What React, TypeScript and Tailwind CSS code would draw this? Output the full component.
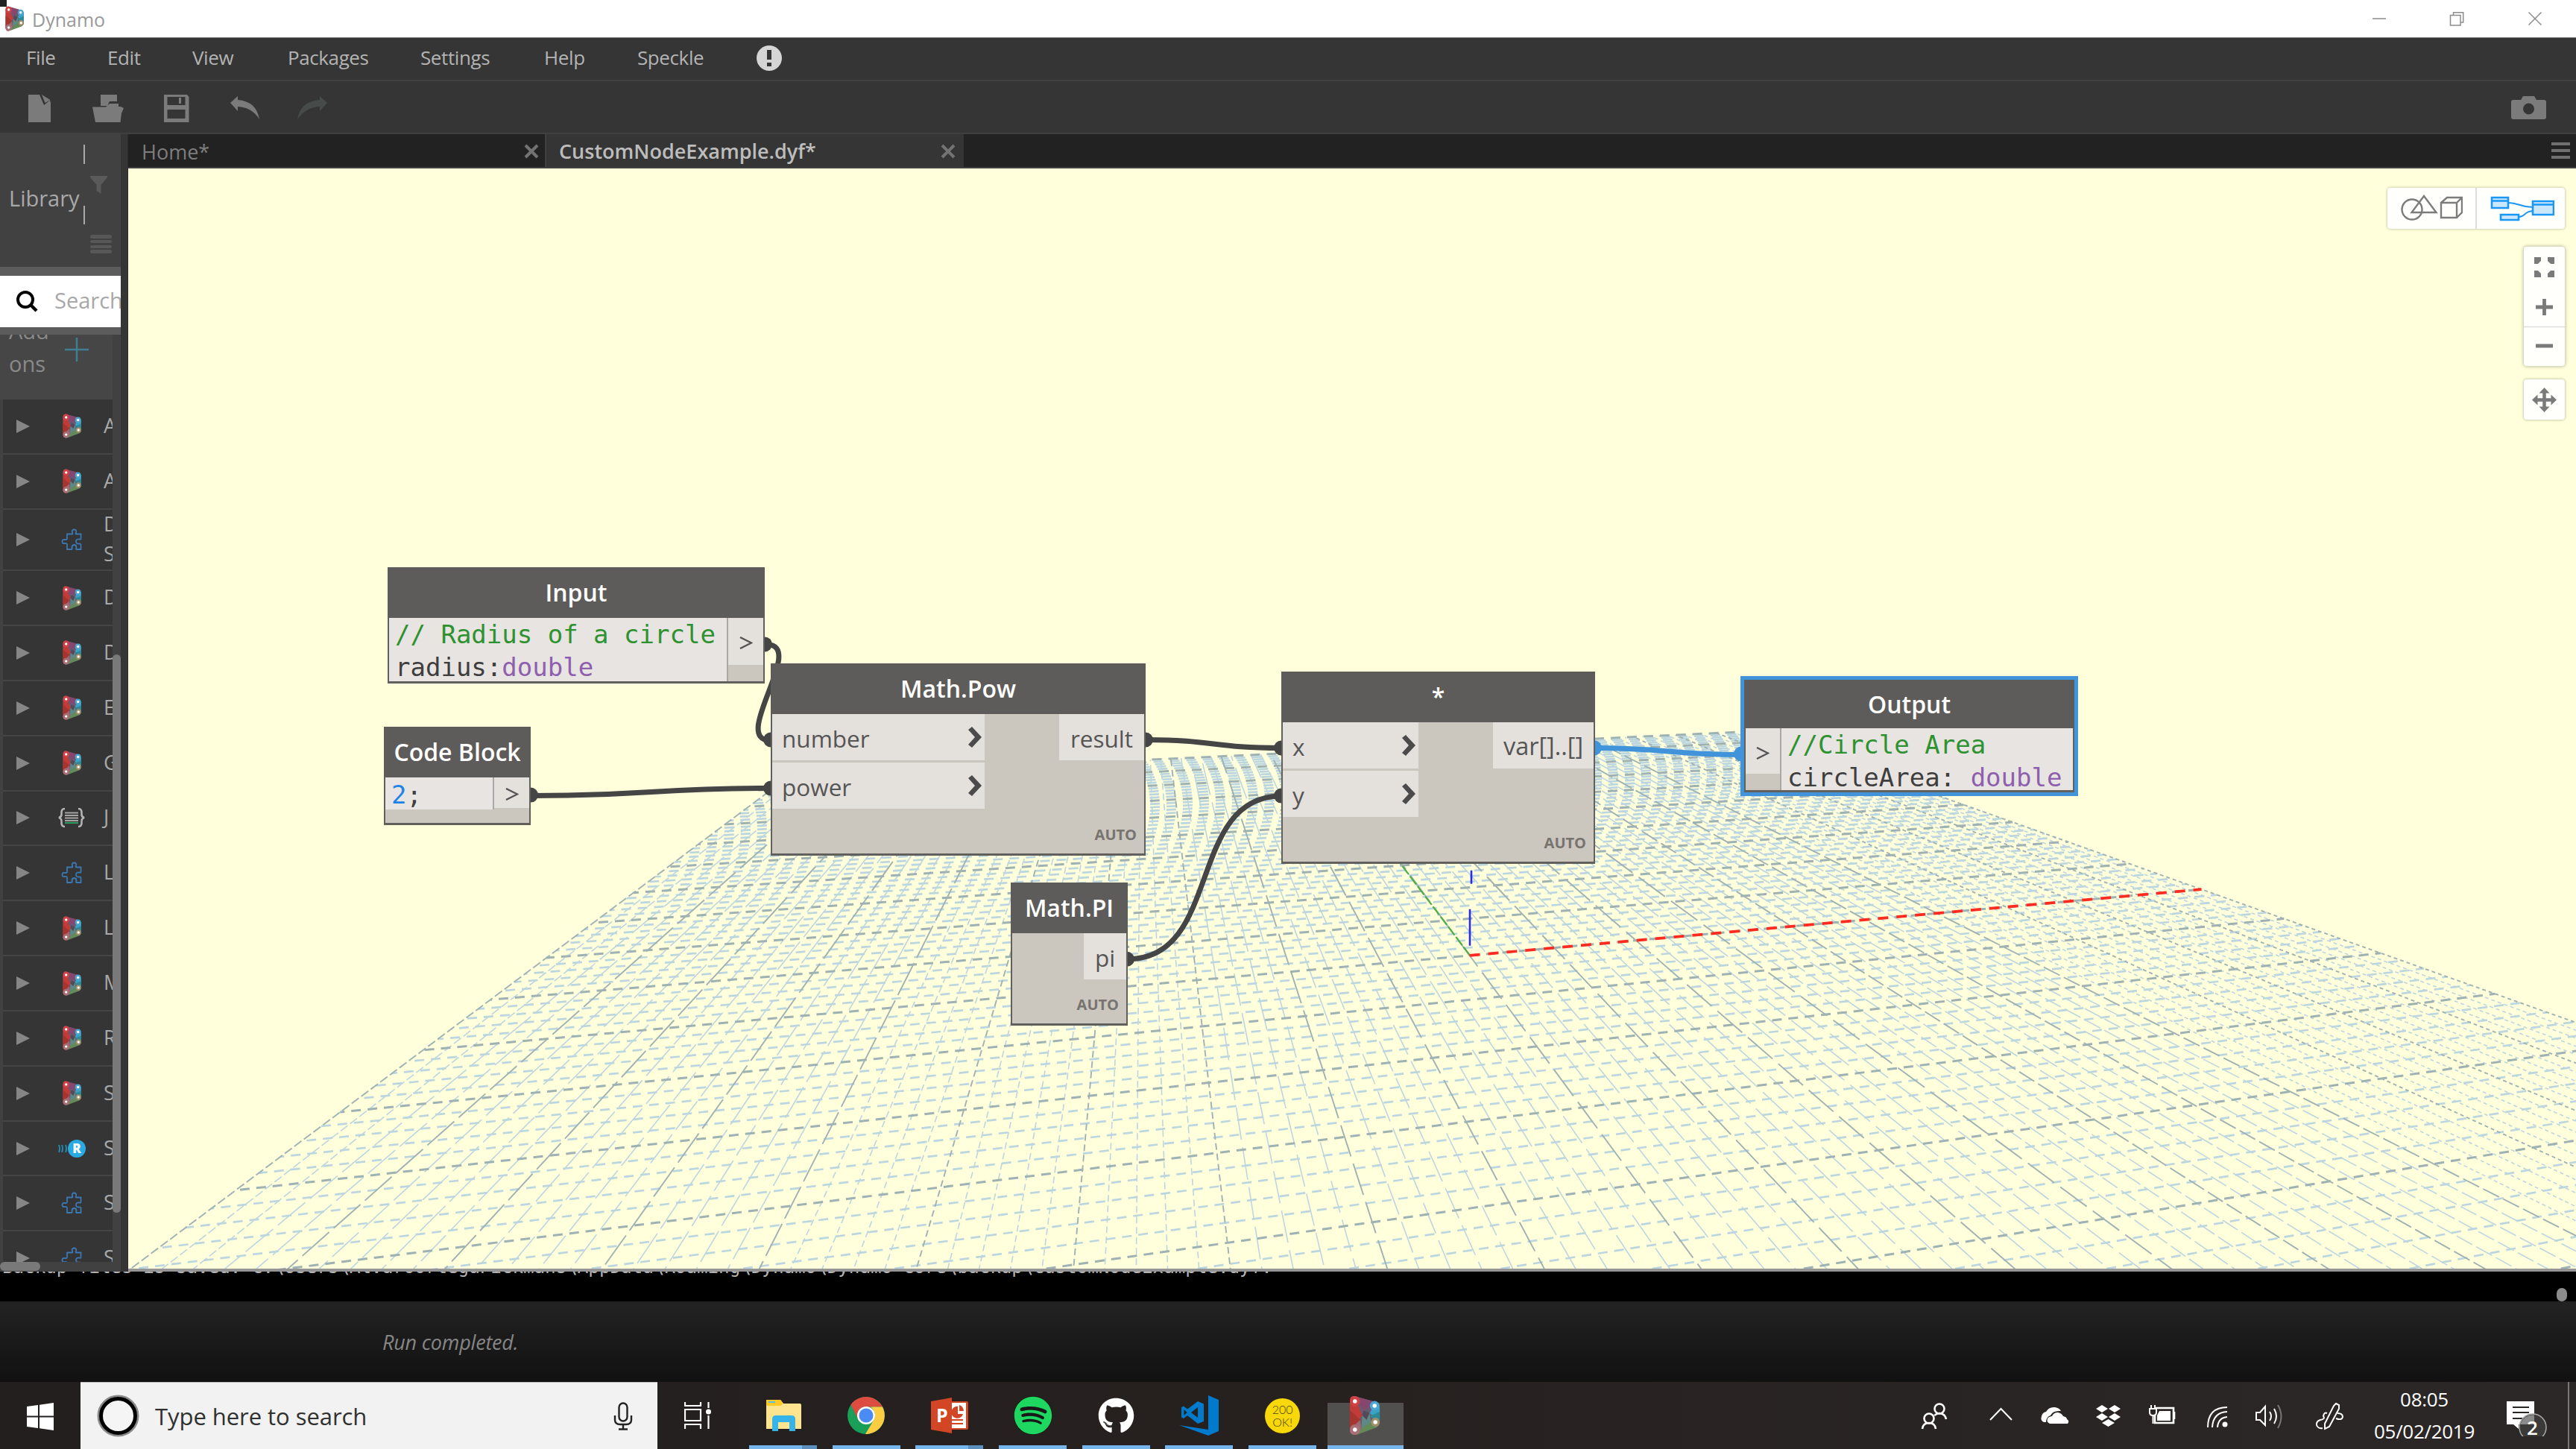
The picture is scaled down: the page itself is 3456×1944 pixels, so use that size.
import type { ReactNode } from "react";
import { FaGithub, FaSpotify } from "react-icons/fa";

/* ---------- ground grid in perspective ---------- */

const ORIGIN = [2395.55, 1556.65, 1.215];
const AXIS_U = [182.795, 14.865, 0.0215];
const AXIS_V = [158.48, 71.07, 0.10343];
const NEAR = 0.66;

function project(i: number, j: number) {
  const [x, y, w] = ORIGIN.map((o, n) => o + i * AXIS_U[n] + j * AXIS_V[n]);
  return `${(x / w).toFixed(1)} ${(y / w).toFixed(1)}`;
}

function depthDash(i: number) {
  if (i <= -9.5) return "12 4";
  if (i <= -6) return "48 8";
  if (i <= -3) return "9 5";
  if (i <= 3) return "44 10";
  if (i <= 6) return "24 6";
  return "5 4";
}

const steps = Array.from({ length: 101 }, (_, n) => n);

function GridLines({ major }: { major: boolean }) {
  const stroke = major ? "#9fb2b3" : "#bcd6df";
  const own = steps.filter((n) => (n % 5 === 0) === major);
  return (
    <g stroke={stroke} fill="none">
      {own.map((n) => {
        const i = n / 5 - 10;
        const near = Math.max(-10, (NEAR - ORIGIN[2] - i * AXIS_U[2]) / AXIS_V[2]);
        return (
          <path key={`u${n}`} d={`M${project(i, 10)}L${project(i, near)}`} strokeWidth={major ? 1.9 : 1.6} strokeDasharray={depthDash(i)} strokeDashoffset={(n * 17) % 60} />
        );
      })}
      {own.map((n) => {
        const j = n / 5 - 10;
        const near = Math.max(-10, (NEAR - ORIGIN[2] - j * AXIS_V[2]) / AXIS_U[2]);
        if (near >= 10) return null;
        return (
          <path key={`v${n}`} d={`M${project(near, j)}L${project(10, j)}`} strokeWidth={major ? 3 : 2.7} strokeDasharray="13 9" strokeDashoffset={(n * 7) % 22} />
        );
      })}
    </g>
  );
}

function Scene() {
  return (
    <svg className="absolute inset-0 h-full w-full" viewBox="172 226 3284 1475" preserveAspectRatio="none">
      <GridLines major={false} />
      <GridLines major />
      <path d="M1972 1281L1860 1133" stroke="#4fae45" strokeWidth="2.2" strokeDasharray="14 3" />
      <path d={`M${project(0, 0)}L${project(10, 0)}`} stroke="#ff2a20" strokeWidth="3.600" strokeDasharray="14 11" />
      <path d="M1972 1268V1219M1974 1185V1167" stroke="#2a2af0" strokeWidth="2.6" />
    </svg>
  );
}

function Wires() {
  return (
    <svg className="pointer-events-none absolute inset-0 h-full w-full" viewBox="172 226 3284 1475" preserveAspectRatio="none">
      <g fill="none" stroke="#454545" strokeWidth="7">
        <path d="M1028 864C1084 864 978 993 1034 993" />
        <path d="M714 1067C874 1067 874 1057 1034 1057" />
        <path d="M1538 992C1628 992 1628 1003 1719 1003" />
        <path d="M1513 1286C1640 1286 1592 1067.500 1719 1067.500" />
        <path d="M2139 1003C2238 1003 2238 1012 2336 1012" stroke="#4193da" />
      </g>
      <g fill="#454545">
        <circle cx="1026" cy="864" r="10" />
        <circle cx="1034" cy="992" r="10" />
        <circle cx="712" cy="1066" r="10" />
        <circle cx="1034" cy="1057" r="10" />
        <circle cx="1537" cy="992" r="10" />
        <circle cx="1719" cy="1003" r="10" />
        <circle cx="1719" cy="1067" r="10" />
        <circle cx="1512" cy="1286" r="10" />
        <circle cx="2139" cy="1003" r="10" fill="#4193da" />
        <circle cx="2336" cy="1011" r="10" fill="#4193da" />
      </g>
    </svg>
  );
}

/* ---------- nodes ---------- */

function Node({ place, title, head = "h-[68px]", children }: { place: string; title: string; head?: string; children: ReactNode }) {
  return (
    <section className={`absolute flex flex-col bg-[#cbc6be] ${place}`}>
      <h2 className={`flex shrink-0 items-center justify-center bg-[#5e5c5a] text-[32px] leading-none font-semibold whitespace-nowrap text-white ${head}`}>
        {title}
      </h2>
      <div className="relative flex min-h-0 flex-1 justify-between border-x-2 border-b-3 border-[#62605d]">{children}</div>
    </section>
  );
}

function InPort({ label }: { label: string }) {
  return (
    <div className="flex h-[62px] items-center justify-between bg-[#e4e0dc] pr-[3px] pl-[13px] text-[31.5px] text-[#555]">
      <span className="pt-[3px]">{label}</span>
      <svg className="h-[28px] w-[20px]" viewBox="0 0 20 28">
        <path d="M1 4L6 0L19 14L6 28L1 24L10 14Z" fill="#4b4b4b" />
      </svg>
    </div>
  );
}

function Auto() {
  return <span className="absolute right-[10px] bottom-[13px] text-[20px] leading-[24px] font-bold text-[#77736f]">AUTO</span>;
}

function Chevron() {
  return (
    <svg className="h-[17px] w-[18px]" viewBox="0 0 18 17">
      <path d="M1 1L16 8.500L1 16" fill="none" stroke="#555" strokeWidth="2.400" />
    </svg>
  );
}

function Nodes() {
  return (
    <>
      <Node place="left-[348px] top-[535px] w-[506px] h-[156px]" title="Input">
        <pre className="flex-1 border-r-2 border-[#aaa7a4] bg-[#e8e4e1] pl-[8px] font-['DejaVu_Sans_Mono',monospace] text-[34px] leading-[44px] text-[#3e3e3e]">
          <span className="text-[#2e9230]">// Radius of a circle</span>
          {"\n"}radius:<span className="text-[#8e5fae]">double</span>
        </pre>
        <div className="flex h-[63px] w-[47px] items-center justify-center bg-[#e4e0dc] pt-[4px]"><Chevron /></div>
      </Node>
      <Node place="left-[343px] top-[749px] w-[197px] h-[132px]" title="Code Block">
        <pre className="h-[43px] flex-1 border-r-2 border-[#aaa7a4] bg-[#e8e4e1] pl-[8px] font-['DejaVu_Sans_Mono',monospace] text-[34px] leading-[46px] text-[#3e3e3e]">
          <span className="text-[#1e83e8]">2</span>;
        </pre>
        <div className="flex h-[41px] w-[47px] items-center justify-center bg-[#e4e0dc] pt-1"><Chevron /></div>
      </Node>
      <Node place="left-[862px] top-[664px] w-[503px] h-[258px]" title="Math.Pow">
        <div className="flex w-[285px] flex-col gap-[3px]">
          <InPort label="number" />
          <InPort label="power" />
        </div>
        <div className="flex h-[62px] w-[114px] items-center justify-center bg-[#e4e0dc] pt-[4px] text-[31.500px] text-[#555]">result</div>
        <Auto />
      </Node>
      <Node place="left-[1184px] top-[958px] w-[157px] h-[192px]" title="Math.PI">
        <div className="ml-auto flex h-[62px] w-[57px] items-center justify-center bg-[#e4e0dc] pt-[4px] text-[31.500px] text-[#555]">pi</div>
        <Auto />
      </Node>
      <Node place="left-[1547px] top-[675px] w-[421px] h-[258px]" title="*">
        <div className="flex w-[182px] flex-col gap-[3px]">
          <InPort label="x" />
          <InPort label="y" />
        </div>
        <div className="flex h-[62px] w-[135px] items-center justify-center bg-[#e4e0dc] pt-[3px] text-[32.500px] text-[#555]">var[]..[]</div>
        <Auto />
      </Node>
      <Node place="left-[2168px] top-[686px] w-[443px] h-[151px] outline-5 outline-[#4193da]" title="Output" head="h-[65px]">
        <div className="flex h-[61px] w-[46px] items-center justify-center bg-[#e4e0dc] pt-[5px]"><Chevron /></div>
        <pre className="flex-1 border-l-2 border-[#aaa7a4] bg-[#e8e4e1] pl-[8px] font-['DejaVu_Sans_Mono',monospace] text-[34px] leading-[44px] text-[#3e3e3e]">
          <span className="text-[#2e9230]">//Circle Area</span>
          {"\n"}circleArea: <span className="text-[#8e5fae]">double</span>
        </pre>
      </Node>
    </>
  );
}

/* ---------- logos ---------- */

function DynamoLogo({ className }: { className: string }) {
  return (
    <svg className={className} viewBox="0 0 44 54" preserveAspectRatio="none">
      <path d="M7 1L37 9Q42 11 42 16V37Q42 41 38 43L9 53Q1 54 1 46V7Q2 0 7 1Z" fill="#6c5872" />
      <path d="M7 1Q1 1 1 7V46L18 27Z" fill="#c23b38" />
      <path d="M1 20V46Q1 53 8 53L16 33Z" fill="#a8342f" />
      <path d="M1 46Q1 54 9 53L17 44L15 33Z" fill="#9a6a70" />
      <path d="M7 1L37 9L20 20Z" fill="#86476f" />
      <path d="M37 9Q42 11 42 16V34L28 24Z" fill="#3aa2c4" />
      <path d="M42 22V36L28 28Z" fill="#2c8a96" />
      <path d="M17 44L38 30L42 38L38 43L10 53Z" fill="#648a58" />
      <path d="M18 27L28 24L30 36L17 44Z" fill="#5d8a86" />
      <path d="M20 20L28 24L24 33L18 27Z" fill="#534a59" />
      <circle cx="8" cy="8" r="7" fill="#cf4345" />
      <circle cx="35" cy="14" r="6.500" fill="#4aa6d2" />
      <circle cx="8" cy="46" r="7" fill="#a86f76" />
      <circle cx="36" cy="36" r="6" fill="#a0906a" />
      <circle cx="8" cy="8" r="2.800" fill="#fff" />
      <circle cx="35" cy="14" r="2.800" fill="#fff" />
      <circle cx="8" cy="46" r="2.800" fill="#fff" />
      <circle cx="36" cy="36" r="2.800" fill="#fff" />
    </svg>
  );
}

function Puzzle() {
  return (
    <svg className="h-[30px] w-[28px]" viewBox="0 0 28 30">
      <path
        d="M8 7.500H14.500Q16 7.500 15 5.500Q14 1.500 17.500 1.500Q21 1.500 20 5.500Q19 7.500 20.500 7.500H26.500V13.500Q26.500 15.500 24.500 14.500Q20 14 20 17.500Q20 21 24.500 20.500Q26.500 20 26.500 22V28H20.500Q19.500 27.500 20.500 25.500Q20.500 22 17.500 22Q14.500 22 14.500 25.500Q15.500 27.500 14 28H8V21.500Q7.500 19.500 6 20Q1.500 21 1.500 17.500Q1.500 14 6 15Q7.500 15.500 8 14Z"
        fill="none"
        stroke="#3b78b4"
        strokeWidth="1.800"
      />
    </svg>
  );
}

function JsonIcon() {
  return (
    <svg className="-ml-[5px] h-[28px] w-[38px]" viewBox="0 0 38 28">
      <path d="M10 2Q5 2 5.500 8Q6 13 2 14Q6 15 5.500 20Q5 26 10 26M28 2Q33 2 32.500 8Q32 13 36 14Q32 15 32.500 20Q33 26 28 26" fill="none" stroke="#b4b4b4" strokeWidth="2.600" />
      <path d="M10 7.500H28M10 11H28M10 14.500H28M10 18H28" stroke="#a5a5a5" strokeWidth="2" />
      <path d="M10 21H28" stroke="#2f9e62" strokeWidth="2" />
    </svg>
  );
}

function RevitLink() {
  return (
    <div className="-ml-[4px] flex items-center">
      <svg className="h-[12px] w-[13px]" viewBox="0 0 13 12">
        <path d="M1 1Q3 6 1 11M5 1Q7 6 5 11M10 1Q12 6 10 11" fill="none" stroke="#2489ad" strokeWidth="2" />
      </svg>
      <span className="flex size-[24px] items-center justify-center rounded-full bg-[#2aaae2] text-[17px] leading-none font-extrabold text-white">R</span>
    </div>
  );
}

/* ---------- library ---------- */

type Kind = "dynamo" | "puzzle" | "json" | "link";
const library: { kind: Kind; label: string }[] = [
  { kind: "dynamo", label: "A" },
  { kind: "dynamo", label: "A" },
  { kind: "puzzle", label: "D S" },
  { kind: "dynamo", label: "D" },
  { kind: "dynamo", label: "D" },
  { kind: "dynamo", label: "E" },
  { kind: "dynamo", label: "G" },
  { kind: "json", label: "J" },
  { kind: "puzzle", label: "L" },
  { kind: "dynamo", label: "L" },
  { kind: "dynamo", label: "M" },
  { kind: "dynamo", label: "R" },
  { kind: "dynamo", label: "S" },
  { kind: "link", label: "S" },
  { kind: "puzzle", label: "S" },
  { kind: "puzzle", label: "S" },
];

function RowIcon({ kind }: { kind: Kind }) {
  if (kind === "puzzle") return <Puzzle />;
  if (kind === "json") return <JsonIcon />;
  if (kind === "link") return <RevitLink />;
  return <DynamoLogo className="ml-[2px] h-[33px] w-[26px]" />;
}

function Library() {
  return (
    <aside className="flex w-[172px] shrink-0 border-r border-[#2c2c2c] bg-[#353535]">
      <div className="flex w-[162px] flex-col overflow-hidden bg-[#414141]">
        <div className="flex h-[178px] shrink-0 pl-[12px]">
          <span className="w-[100px] pt-[62px] text-[29px] leading-[48px] text-[#a9a9a9]">Library</span>
          <div className="flex flex-col gap-[56px] pt-[14px]">
            <span className="h-[26px] w-[2px] bg-[#a9a9a9]" />
            <span className="h-[25px] w-[2px] bg-[#a9a9a9]" />
          </div>
          <div className="pt-[56px] pl-[7px]">
            <svg className="h-[24px] w-[23px]" viewBox="0 0 23 24">
              <path d="M0 0H23V2L14.500 12V24L8.500 20V12L0 2Z" fill="#5a5a5a" />
            </svg>
            <div className="mt-[55px] flex w-[29px] flex-col gap-[2.300px]">
              <span className="h-[4.500px] rounded-sm bg-[#585858]" />
              <span className="h-[4.500px] rounded-sm bg-[#585858]" />
              <span className="h-[4.500px] rounded-sm bg-[#585858]" />
              <span className="h-[4.500px] rounded-sm bg-[#585858]" />
            </div>
          </div>
        </div>
        <div className="flex h-[91px] shrink-0 items-center border-t-12 border-b-10 border-[#5c5c5c] bg-white pl-[22px]">
          <svg className="h-[30px] w-[29px] shrink-0" viewBox="0 0 29 30">
            <circle cx="12" cy="12" r="10" fill="none" stroke="#000" strokeWidth="4" />
            <path d="M19 19L27 27" stroke="#000" strokeWidth="4.500" />
          </svg>
          <span className="-mt-[4px] ml-[22px] text-[29px] text-[#a8a8a8]">Search</span>
        </div>
        <div className="flex h-[1244px] shrink-0">
          <div className="w-[151px] overflow-hidden">
            <div className="flex h-[87px] items-start justify-between bg-[#464646] pr-[32px] pl-[12px]">
              <span className="-mt-[27px] w-[60px] text-[29px] leading-[44px] text-[#8a8a8a]">Add-ons</span>
              <svg className="mt-[4px] h-[32px] w-[32px]" viewBox="0 0 32 32">
                <path d="M16 0V32M0 16H32" stroke="#3f7f92" strokeWidth="2.500" />
              </svg>
            </div>
            <ul className="pl-[4px]">
              {library.map((row, n) => (
                <li key={n} className={`flex items-center overflow-hidden border-b-2 border-[#454545] bg-[#353535] pl-[18px] ${row.label.length > 1 ? "h-[82.500px]" : "h-[73.850px]"}`}>
                  <svg className="h-[18px] w-[18px] shrink-0" viewBox="0 0 18 18">
                    <path d="M0 0L18 9L0 18Z" fill="#868686" />
                  </svg>
                  <span className="ml-[42px] flex w-[57px] shrink-0"><RowIcon kind={row.kind} /></span>
                  <span className="-mt-[2px] w-[20px] shrink-0 text-[27px] leading-[40px] text-[#a9a9a9]">{row.label}</span>
                </li>
              ))}
            </ul>
          </div>
          <div className="flex-1 pt-[429px]">
            <div className="h-[749px] rounded-full bg-[#797979]" />
          </div>
        </div>
        <div className="flex-1"><div className="h-[12px] w-[54px] rounded-full bg-[#797979]" /></div>
      </div>
    </aside>
  );
}

/* ---------- top bars ---------- */

function TopBars() {
  return (
    <header>
      <div className="relative flex h-[50px] items-center bg-white pl-[7px] text-[#999]">
        <span className="absolute top-0 left-0 h-[9px] w-[9px] bg-[#222]" />
        <DynamoLogo className="h-[34px] w-[26px]" />
        <span className="ml-[10px] pt-[3px] text-[25px]">Dynamo</span>
        <svg className="mr-[45px] ml-auto h-[20px] w-[228px]" viewBox="3183 14 228 20">
          <g fill="none" stroke="#8c8c8c" strokeWidth="1.500">
            <path d="M3183 24H3201M3392.500 15.500L3409.500 32.500M3409.500 15.500L3392.500 32.500" />
            <path d="M3287.500 19.500H3301V33H3287.500ZM3291.500 19.500V15.700H3304.700V29H3301" />
          </g>
        </svg>
      </div>
      <nav className="grid h-[59px] grid-cols-[109px_114px_128px_178px_166px_125px_160px_34px] items-center border-t border-b-2 border-t-[#777] border-b-[#404040] bg-[#353535] pb-[4px] pl-[35px] text-[26px] tracking-[-0.400px] text-[#b3b3b3]">
        <span>File</span>
        <span>Edit</span>
        <span>View</span>
        <span>Packages</span>
        <span>Settings</span>
        <span>Help</span>
        <span>Speckle</span>
        <svg className="mt-[2px] h-[34px] w-[34px]" viewBox="0 0 34 34">
          <circle cx="17" cy="17" r="17" fill="#d5d5d5" />
          <path d="M14 6H20V19H14ZM14 23H20V28H14Z" fill="#353535" />
        </svg>
      </nav>
      <div className="flex h-[71px] items-center justify-between border-b-2 border-[#404040] bg-[#353535] pr-[40px] pl-[36px]">
        <svg className="mt-[2px] h-[40px] w-[410px]" viewBox="36 125 410 40">
          <g fill="#7b7b7b">
            <path d="M38 127H53L59 141L67 134.500L68 138V164H38ZM56 127L67.500 134L60.500 138Z" />
            <path d="M135 127H157V136H147L144 142H135ZM124 143.500H142L147 139H159V143H162L166 145L163 152L161.500 164H128Z" />
            <path d="M220 127H251L253.500 130V164H220ZM224.500 130V141H248.500V130ZM224.500 147V159H248.500V147ZM240 131H243V139H240Z" fillRule="evenodd" />
            <path d="M309 138L319 129V134Q344 136 348 160Q338 144 319 143V149Z" />
          </g>
          <path d="M439 138L429 129V134Q403 136 399 160Q410 144 429 143V149Z" fill="#474c4a" />
        </svg>
        <svg className="mt-[2px] h-[31px] w-[47px]" viewBox="0 0 47 31">
          <path d="M3 5H13L16 0H31L34 5H44Q47 5 47 8V28Q47 31 44 31H3Q0 31 0 28V8Q0 5 3 5ZM23.500 9.500A7.500 7.500 0 1 0 23.500 24.500A7.500 7.500 0 1 0 23.500 9.500Z" fill="#7b7b7b" fillRule="evenodd" />
        </svg>
      </div>
    </header>
  );
}

function Cross({ className }: { className: string }) {
  return (
    <svg className={className} viewBox="0 0 20 20">
      <path d="M2 2L18 18M18 2L2 18" stroke="#737373" strokeWidth="4" />
    </svg>
  );
}

function Tabs() {
  return (
    <div className="flex h-[46px] shrink-0 items-center border-b-2 border-[#404040] bg-[#222] text-[26px]">
      <div className="flex h-full w-[561px] items-center justify-between border-r-2 border-[#404040] pr-[8px] pl-[18px] text-[27px] text-[#7d7d7d]">
        <span className="pt-[4px]">Home*</span>
        <Cross className="mt-[2px] size-[20px]" />
      </div>
      <div className="flex h-full w-[560px] items-center justify-between bg-[#353535] pr-[11px] pl-[17px] font-semibold text-[#bdbdbd]">
        <span className="pt-[3px] text-[27px]">CustomNodeExample.dyf*</span>
        <Cross className="mt-[2px] size-[20px]" />
      </div>
      <div className="mr-[8px] ml-auto flex w-[25px] flex-col gap-[5px]">
        <span className="h-[4px] bg-[#707070]" />
        <span className="h-[4px] bg-[#707070]" />
        <span className="h-[4px] bg-[#707070]" />
      </div>
    </div>
  );
}

/* ---------- view controls ---------- */

function ViewControls() {
  return (
    <div className="absolute top-[26px] right-[15px] flex flex-col items-end">
      <div className="flex h-[55px] w-[238px] rounded-sm bg-[#fffffb] shadow-[0_0_3px_1px_rgba(0,0,0,0.18)]">
        <div className="flex w-[120px] items-center justify-center border-r-2 border-[#ddd]">
          <svg className="-mt-[2px] h-[36px] w-[84px]" viewBox="0 0 84 36">
            <g fill="none" stroke="#7c7c7c" strokeWidth="2.400">
              <circle cx="16" cy="20" r="13.500" />
              <path d="M32 2L48.500 24H15.500ZM55 11H76V31H55ZM55 11L63 4H83V24L76 31M76 11L83 4" />
            </g>
          </svg>
        </div>
        <div className="flex flex-1 items-center justify-center pl-[3px]">
          <svg className="h-[34px] w-[86px]" viewBox="0 0 86 34">
            <g fill="#cbe7fd" stroke="#1a96f5" strokeWidth="2.600">
              <path d="M24 9C38 9 40 15 57 15M38 28C48 28 44 21 57 20" fill="none" strokeWidth="2" />
              <path d="M2 2H24V16H2ZM2 6.500H24M14 25H38V32H14ZM57 7H85V25H57ZM57 11.500H85" />
            </g>
          </svg>
        </div>
      </div>
      <div className="mt-[24px] h-[160px] w-[55px] rounded-sm bg-[#fffffb] shadow-[0_0_4px_1px_rgba(0,0,0,0.25)]">
        <svg className="h-full w-full" viewBox="0 0 55 160">
          <path d="M0 107.500H55" stroke="#ddd" strokeWidth="1.500" />
          <path d="M14 14H23V19L19 23H14ZM41 14H32V19L36 23H41ZM14 41H23V36L19 32H14ZM41 41H32V36L36 32H41Z" fill="#7a7a7a" />
          <path d="M27.500 70V92M16 81H39M16 133H39" stroke="#7a7a7a" strokeWidth="4.800" />
        </svg>
      </div>
      <div className="mt-[18px] h-[54px] w-[55px] rounded-sm bg-[#fffffb] shadow-[0_0_3px_1px_rgba(0,0,0,0.2)]">
        <svg className="h-full w-full" viewBox="0 0 55 54">
          <path d="M27.500 14V41M14 27.500H41" stroke="#7a7a7a" strokeWidth="4.500" />
          <path d="M27.500 11L34.500 18.500H20.500ZM27.500 44L34.500 36.500H20.500ZM11 27.500L18.500 20.500V34.500ZM44 27.500L36.500 20.500V34.500Z" fill="#7a7a7a" />
        </svg>
      </div>
    </div>
  );
}

/* ---------- taskbar ---------- */

function AppButton({ children, split = false, active = false }: { children: ReactNode; split?: boolean; active?: boolean }) {
  if (active)
    return (
      <div className="ml-[-6px] flex h-[90px] w-[102px] flex-col">
        <div className="relative mt-[28px] flex flex-1 justify-center bg-[#52504f]"><div className="-mt-[10px]">{children}</div></div>
        <div className="h-[5px] bg-[#76b5ec]" />
      </div>
    );
  return (
    <div className="flex h-[90px] w-[91px] flex-col">
      <div className="flex flex-1 items-center justify-center pt-[5px]">{children}</div>
      <div className={`h-[5px] border-[#5b8fbd] bg-[#76b5ec] ${split ? "border-r-20" : ""}`} />
    </div>
  );
}

function Apps() {
  return (
    <div className="ml-[50px] flex gap-[20.700px]">
      <AppButton split>
        <svg className="h-[42px] w-[48px]" viewBox="0 0 48 42">
          <path d="M1 0H20L24 5H46Q48 5 48 7V39H1Z" fill="#ffe48f" />
          <path d="M1 0H20L24 5L20 8H1Z" fill="#ffca28" />
          <path d="M4 3H13" stroke="#5cc0e8" strokeWidth="2" />
          <path d="M9 42V26Q9 21 14 21H35Q40 21 40 26V42H32V30H17V42Z" fill="#36b3e8" />
        </svg>
      </AppButton>
      <AppButton>
        <svg className="h-[50px] w-[50px]" viewBox="0 0 50 50">
          <circle cx="25" cy="25" r="25" fill="#1a9f59" />
          <path d="M4.500 10.500A25 25 0 0 1 47 13.500H25A12 12 0 0 0 14 30Z" fill="#dc4c40" />
          <path d="M47 13.500A25 25 0 0 1 24 50L36 30Q39 20 31 13.500Z" fill="#fccd43" />
          <circle cx="25" cy="25" r="12" fill="#fff" />
          <circle cx="25" cy="25" r="9.500" fill="#4a8bf5" />
        </svg>
      </AppButton>
      <AppButton split>
        <svg className="h-[48px] w-[50px]" viewBox="0 0 50 48">
          <path d="M27 5H48Q50 5 50 7V41Q50 43 48 43H27Z" fill="#d24625" />
          <path d="M28 7H47V41H28Z" fill="#fff" />
          <path d="M37 12A8 8 0 1 0 43 22H36V12ZM38 10V18H44Q43 11 38 10ZM28 29H43V31H28ZM28 34H43V36H28Z" fill="#d24625" />
          <path d="M0 5L28 0V48L0 43Z" fill="#d24625" />
          <text x="7" y="33" fontSize="25" fontWeight="700" fill="#fff">P</text>
        </svg>
      </AppButton>
      <AppButton>
        <span className="rounded-full bg-[#181818]"><FaSpotify className="size-[52px] text-[#1ed760]" /></span>
      </AppButton>
      <AppButton><FaGithub className="size-[49px] text-white" /></AppButton>
      <AppButton>
        <svg className="h-[54px] w-[53px]" viewBox="0 0 53 54">
          <path d="M39 0L53 6V48L39 54L0 40L39 46Z" fill="#007acc" />
          <path d="M25 8L33 11.500V35L25 38L11 27L6 31L3 29.500V16L6 14.500L11 18.500ZM25 16L16 23L25 30ZM6.500 19V27L10.500 23Z" fill="#007acc" fillRule="evenodd" />
        </svg>
      </AppButton>
      <AppButton>
        <span className="flex size-[47px] flex-col items-center justify-center rounded-full bg-[#f8d808] font-['Lato',sans-serif] text-[16px] leading-[17px] font-light text-[#4b4510]">
          <span>200</span>
          <span>OK!</span>
        </span>
      </AppButton>
      <AppButton active><DynamoLogo className="h-[54px] w-[43px]" /></AppButton>
    </div>
  );
}

function Tray() {
  return (
    <div className="ml-auto flex items-center text-white">
      <svg className="h-[90px] w-[580px]" viewBox="2570 1854 580 90">
        <g fill="none" stroke="#fff" strokeWidth="2.600">
          <circle cx="2602" cy="1890" r="6.500" />
          <circle cx="2588" cy="1903" r="6.500" />
          <path d="M2579 1917Q2580 1909 2588 1909Q2596 1909 2597 1917M2595 1899Q2599 1896 2602 1896Q2610 1897 2611 1904" />
          <path d="M2670 1905L2684.500 1890L2699 1905" strokeWidth="2" />
          <path d="M2892 1889H2916V1909H2891V1899M2917 1894V1904" />
          <path d="M2884 1890H2893V1895Q2893 1899 2888.500 1899Q2884 1899 2884 1895ZM2886 1885V1890M2891 1885V1890M2888.500 1899V1910" strokeWidth="2" />
          <path d="M2962 1915Q2962 1888 2988 1888M2968 1915Q2969 1895 2988 1894M2975 1915Q2976 1902 2988 1901" strokeWidth="2" />
          <path d="M3027 1895H3032L3039 1887V1912L3032 1905H3027Z" strokeWidth="2" />
          <path d="M3045 1894Q3049 1900 3045 1906M3051 1890Q3057 1900 3051 1910" strokeWidth="2" />
          <path d="M3056 1885Q3065 1900 3056 1916" stroke="#777" strokeWidth="2" />
          <path d="M3134 1883L3138 1885L3138 1890L3125 1914L3119 1917V1910L3131 1886ZM3122 1896Q3118 1894 3117 1900Q3120 1904 3113 1905Q3107 1907 3108 1912Q3110 1917 3116 1916M3136 1896Q3143 1896 3143 1901Q3142 1906 3134 1903" strokeWidth="2" />
        </g>
        <path d="M2897 1893H2912V1906H2894V1899Z" fill="#fff" />
        <circle cx="2985" cy="1911" r="3.500" fill="#fff" />
        <path d="M2742 1908Q2737 1906 2739 1900Q2740 1895 2745 1894Q2749 1887 2757 1888Q2763 1889 2765 1893Q2754 1892 2751 1899Q2745 1901 2745 1908Z" fill="#fff" />
        <path d="M2750 1910Q2745 1908 2747 1903Q2748 1901 2753 1900Q2755 1895 2761 1895Q2766 1896 2768 1900Q2773 1901 2773 1904Q2777 1906 2774 1910Z" fill="#fff" />
        <path
          d="M2820 1885L2828 1890L2820 1895L2812 1890ZM2837 1885L2845 1890L2837 1895L2829 1890ZM2820 1896L2828 1901L2820 1906L2812 1901ZM2837 1896L2845 1901L2837 1906L2829 1901ZM2828.500 1904L2837 1909L2828.500 1914L2820 1909Z"
          fill="#fff"
        />
      </svg>
      <div className="ml-[20px] flex w-[166px] flex-col items-center pr-[1px] text-[26px] leading-[43px] tracking-[-0.300px]">
        <span>08:05</span>
        <span>05/02/2019</span>
      </div>
      <div className="relative ml-[27px] h-[56px] w-[56px]">
        <svg className="h-full w-full" viewBox="0 0 56 56">
          <path d="M0 9H37V40H16L16 46L9 40H0Z" fill="#fff" />
          <path d="M8 17H30M8 24H30M8 32H22" stroke="#2b2725" strokeWidth="2.200" />
          <circle cx="35" cy="44" r="18" fill="#3b3a39" stroke="#aaa" strokeWidth="1.500" />
          <path d="M18.500 40A17 17 0 0 1 37 27.500V40Z" fill="#8a8a8a" />
        </svg>
        <span className="absolute top-[29px] left-[27px] text-[26px] leading-[30px] font-semibold">2</span>
      </div>
      <span className="ml-[26px] h-[90px] w-[11px] border-l-2 border-[#777]" />
    </div>
  );
}

function Taskbar() {
  return (
    <footer className="flex h-[90px] items-center bg-gradient-to-r from-[#231f1e] via-[#26211f] to-[#2c2827]">
      <svg className="mt-[2px] ml-[36px] h-[37px] w-[36px]" viewBox="0 0 36 37">
        <path d="M0 5L15 3V17.500H0ZM17 2.700L36 0V17.500H17ZM0 19.500H15V34L0 32ZM17 19.500H36V37L17 34.300Z" fill="#fff" />
      </svg>
      <div className="ml-[36px] flex h-[90px] w-[774px] items-center border-t border-[#bbb] bg-[#f2f2f2] pr-[33px] pl-[22px]">
        <svg className="size-[57px]" viewBox="0 0 57 57">
          <circle cx="28.500" cy="28.500" r="26.500" fill="none" stroke="#8a8a8a" strokeWidth="3" />
          <circle cx="28.500" cy="28.500" r="23" fill="#f5f5f5" stroke="#000" strokeWidth="5" />
        </svg>
        <span className="ml-[21px] pt-[2px] text-[31px] tracking-[0px]">
          <span className="tracking-[-0.050px] text-[#303030]">Type here to search</span>
        </span>
        <svg className="ml-auto h-[38px] w-[26px]" viewBox="0 0 26 38">
          <rect x="7.500" y="1.500" width="11" height="24" rx="5.500" fill="none" stroke="#222" strokeWidth="2.400" />
          <path d="M2 18V24Q2 30 9 30H17Q24 30 24 24V18M13 30V36M7 36.500H19" fill="none" stroke="#222" strokeWidth="2.400" />
        </svg>
      </div>
      <svg className="ml-[36px] h-[36px] w-[37px]" viewBox="0 0 37 36">
        <path d="M1 0V5H22V0M1 36V30H22V36M1 10H22V25H1ZM32.500 0V8M32.500 18V36" fill="none" stroke="#fff" strokeWidth="2.200" />
        <circle cx="32.500" cy="13" r="3.500" fill="#fff" />
      </svg>
      <Apps />
      <Tray />
    </footer>
  );
}

export default function App() {
  return (
    <div className="flex h-[1944px] w-[3456px] flex-col overflow-hidden bg-black font-['Open_Sans',sans-serif]">
      <TopBars />
      <div className="flex h-[1526px] shrink-0">
        <Library />
        <main className="flex min-w-0 flex-1 flex-col">
          <Tabs />
          <div className="relative flex-1 overflow-hidden border-b-4 border-[#959595] bg-[#ffffdc]">
            <Scene />
            <Wires />
            <Nodes />
            <ViewControls />
          </div>
        </main>
      </div>
      <div className="flex h-[40px] shrink-0 items-start justify-between overflow-hidden bg-black pr-[12px] pl-[3px]">
        <p className="-mt-[25px] font-['DejaVu_Sans_Mono',monospace] text-[24.200px] leading-[38px] whitespace-nowrap text-[#b5b5b5]">
          {"Backup files is saved: C:\\Users\\AlvaroOrtegaPickmans\\AppData\\Roaming\\Dynamo\\Dynamo Core\\backup\\CustomNodeExample.dyf."}
        </p>
        <span className="mt-[22px] h-[18px] w-[14px] rounded-full bg-[#8c8c8c]" />
      </div>
      <div className="flex h-[108px] shrink-0 items-center bg-gradient-to-b from-[#232323] to-[#111] pt-[2px] pl-[513px] text-[27px] tracking-[-0.200px] text-[#868686] italic">
        Run completed.
      </div>
      <Taskbar />
    </div>
  );
}
